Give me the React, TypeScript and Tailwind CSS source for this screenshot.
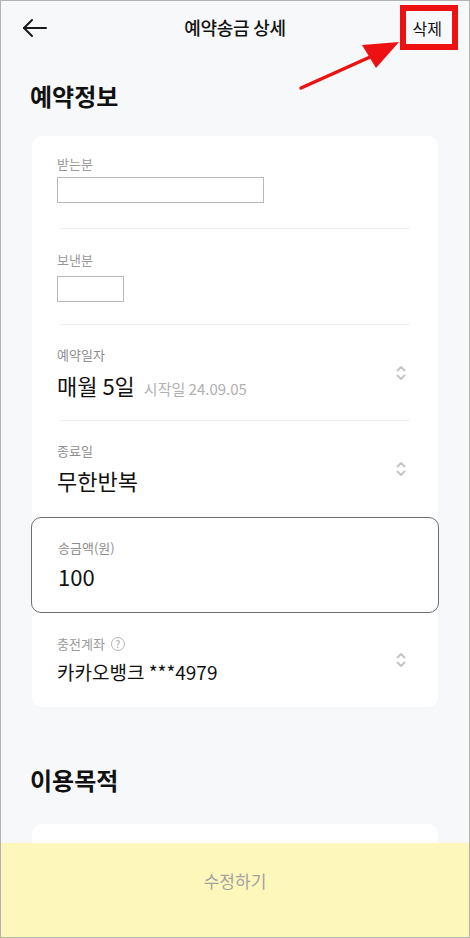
import React from 'react';

const font = { fontFamily: '"Noto Sans CJK KR", "Noto Sans", sans-serif' };

const UpDown: React.FC = () => (
  <svg width="12" height="18" viewBox="0 0 12 18" fill="none" stroke="#c6c6c6" strokeWidth={2} strokeLinecap="round" strokeLinejoin="round">
    <path d="M2.5 6.5 L6 3 L9.5 6.5" />
    <path d="M2.5 11.5 L6 15 L9.5 11.5" />
  </svg>
);

const Divider: React.FC = () => <div className="mx-[28px] h-px bg-[#f0f1f3]" />;

const App: React.FC = () => {
  return (
    <div className="relative w-[470px] h-[938px] overflow-hidden bg-[#f7f8fa] border border-[#b3b3b3] text-[#111]" style={font}>
      {/* header */}
      <div className="grid grid-cols-[1fr_auto_1fr] items-center h-[53px] px-[21px]">
        <svg width="26" height="20" viewBox="0 0 26 20" fill="none" stroke="#1a1a1a" strokeWidth={2} strokeLinecap="round" strokeLinejoin="round">
          <path d="M24 10 H2" />
          <path d="M10 2 L2 10 L10 18" />
        </svg>
        <div className="text-[18px] font-medium tracking-[-0.3px]">예약송금 상세</div>
        <div className="justify-self-end text-[16px] mr-[6px]">삭제</div>
      </div>

      {/* annotation */}
      <div className="absolute left-[399px] top-[4px] w-[58px] h-[45px] border-[6px] border-[#ee1111]" />
      <svg className="absolute left-[280px] top-[30px]" width="120" height="70" viewBox="0 0 120 70">
        <path d="M20 57 L98 22" stroke="#ee1111" strokeWidth={3.5} strokeLinecap="round" />
        <polygon points="118,11 81,14 95,37" fill="#ee1111" />
      </svg>

      <h2 className="mt-[26px] px-[29px] text-[24px] font-bold leading-[32px]">예약정보</h2>

      <div className="mt-[24px] mx-[31px] bg-white rounded-[10px]">
        {/* 받는분 */}
        <div className="h-[92px] px-[25px] pt-[19px]">
          <div className="text-[13px] leading-[18px] text-[#9a9a9a]">받는분</div>
          <div className="mt-[4px] w-[207px] h-[26px] border border-[#b8b8b8]" />
        </div>
        <Divider />
        {/* 보낸분 */}
        <div className="h-[95px] px-[25px] pt-[22px]">
          <div className="text-[13px] leading-[18px] text-[#9a9a9a]">보낸분</div>
          <div className="mt-[7px] w-[67px] h-[26px] border border-[#b8b8b8]" />
        </div>
        <Divider />
        {/* 예약일자 */}
        <div className="h-[95px] px-[25px] pr-[31px] flex items-center justify-between">
          <div className="pt-[1px]">
            <div className="text-[13px] leading-[18px] text-[#8e8e8e]">예약일자</div>
            <div className="mt-[7px] flex items-baseline">
              <span className="text-[22px] leading-[28px]">매월 5일</span>
              <span className="ml-[9px] text-[15px] text-[#b0b0b0]">시작일 24.09.05</span>
            </div>
          </div>
          <UpDown />
        </div>
        <Divider />
        {/* 종료일 */}
        <div className="h-[96px] px-[25px] pr-[31px] flex items-center justify-between">
          <div className="-mt-[2px]">
            <div className="text-[13px] leading-[18px] text-[#8e8e8e]">종료일</div>
            <div className="mt-[6px] text-[22px] leading-[28px]">무한반복</div>
          </div>
          <UpDown />
        </div>
        {/* 송금액 */}
        <div className="-mx-px h-[96px] border border-[#6e6e6e] rounded-[10px] px-[26px] pt-[21px]">
          <div className="text-[13px] leading-[18px] text-[#8e8e8e]">송금액(원)</div>
          <div className="mt-[5px] text-[22px] leading-[28px]">100</div>
        </div>
        {/* 충전계좌 */}
        <div className="h-[94px] px-[25px] pr-[31px] flex items-center justify-between">
          <div className="-mt-[1px]">
            <div className="flex items-center text-[13px] leading-[18px] text-[#9a9a9a]">
              충전계좌
              <span className="ml-[6px] w-[14px] h-[14px] rounded-full border border-[#b5b5b5] text-[10px] leading-[12px] text-[#a5a5a5] flex items-center justify-center">?</span>
            </div>
            <div className="mt-[6px] text-[19px] leading-[26px]">카카오뱅크 ***4979</div>
          </div>
          <UpDown />
        </div>
      </div>

      <h2 className="mt-[57px] px-[29px] text-[24px] font-bold leading-[32px]">이용목적</h2>
      <div className="mt-[28px] mx-[31px] h-[200px] bg-white rounded-[10px]" />

      {/* bottom button */}
      <div className="absolute left-0 right-0 bottom-0 h-[94px] bg-[#fef7bb] flex justify-center pt-[26px]">
        <span className="text-[17px] leading-[24px] text-[#a3a3a3]">수정하기</span>
      </div>
    </div>
  );
};

export default App;
